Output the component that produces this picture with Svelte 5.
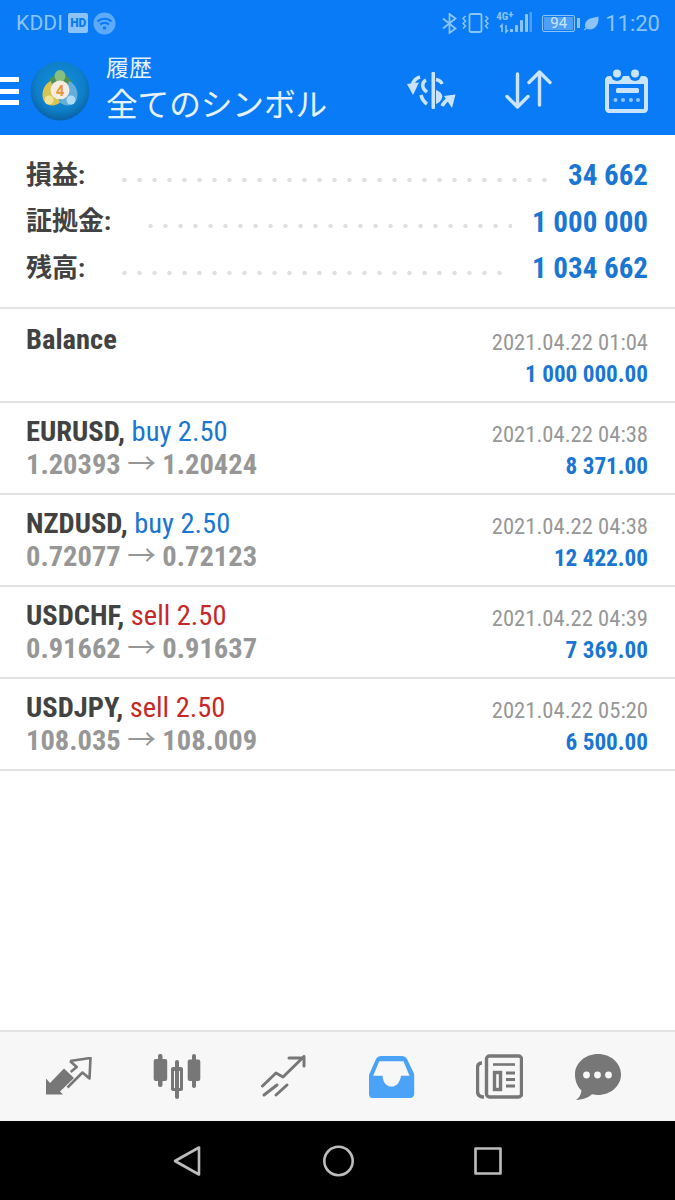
<script>
  const summary = [
    { label: '損益:', value: '34 662' },
    { label: '証拠金:', value: '1 000 000' },
    { label: '残高:', value: '1 034 662' }
  ];

  const deals = [
    { symbol: 'EURUSD', side: 'buy', lots: '2.50', open: '1.20393', close: '1.20424', time: '2021.04.22 04:38', profit: '8 371.00' },
    { symbol: 'NZDUSD', side: 'buy', lots: '2.50', open: '0.72077', close: '0.72123', time: '2021.04.22 04:38', profit: '12 422.00' },
    { symbol: 'USDCHF', side: 'sell', lots: '2.50', open: '0.91662', close: '0.91637', time: '2021.04.22 04:39', profit: '7 369.00' },
    { symbol: 'USDJPY', side: 'sell', lots: '2.50', open: '108.035', close: '108.009', time: '2021.04.22 05:20', profit: '6 500.00' }
  ];
</script>

<div class="screen">
  <header class="header">
    <div class="status">
      <div class="status__left">
        <span class="carrier">KDDI</span>
        <span class="hd">HD</span>
        <svg class="wifi" width="23" height="23" viewBox="0 0 23 23">
          <circle cx="11.5" cy="11.5" r="11" fill="#5eaafa" />
          <path d="M4.5 9.5a10 10 0 0 1 14 0M7 12.5a6.4 6.4 0 0 1 9 0" fill="none" stroke="#0a7bf7" stroke-width="2" />
          <circle cx="11.5" cy="16" r="1.8" fill="#0a7bf7" />
        </svg>
      </div>
      <div class="status__right">
        <svg class="bt" width="15" height="21" viewBox="0 0 15 21" fill="none" stroke="#8cc3fb" stroke-width="1.8">
          <path d="M1 5.500l12.500 10-6 4.500V1l6 4.500L1 15.500" />
        </svg>
        <svg class="vibrate" width="27" height="20" viewBox="0 0 27 20" fill="none" stroke="#8cc3fb" stroke-width="1.8">
          <rect x="7.500" y="1" width="12" height="18" rx="1.500" />
          <path d="M3.500 3L1 5.500 3.500 8 1 10.500 3.500 13 1 15.500M23.500 3L26 5.500 23.500 8 26 10.500 23.500 13 26 15.500" stroke-width="1.500" />
        </svg>
        <div class="net">
          <span class="net__label">4G<i>+</i></span>
          <svg class="net__signal" width="36" height="22" viewBox="0 0 36 22">
            <path d="M6 20v-7l-2 2M10 13v7l2-2" fill="none" stroke="#8cc3fb" stroke-width="1.600" />
            <rect x="14" y="17" width="3" height="3" fill="#8cc3fb" />
            <rect x="19" y="13" width="3" height="7" rx="1" fill="#8cc3fb" />
            <rect x="24" y="8" width="3" height="12" rx="1" fill="#8cc3fb" />
            <rect x="29" y="2" width="3" height="18" rx="1" fill="#8cc3fb" />
            <rect x="33.500" y="0" width="2.500" height="20" fill="#4d9ff8" />
          </svg>
        </div>
        <div class="battery">
          <div class="battery__body"><span class="battery__level">94</span></div>
          <span class="battery__tip"></span>
        </div>
        <svg class="leaf" width="15" height="15" viewBox="0 0 15 15" fill="#8cc3fb">
          <path d="M14.500.5C15 8 12 13.500 5.500 13.500c-1.300 0-2.400-.4-3-.9L1 14.500 0 13.500l1.600-2C.6 9.500 1 6 3.800 3.800 6.500 1.700 11 1.800 14.500.5z" />
        </svg>
        <span class="clock">11:20</span>
      </div>
    </div>

    <div class="toolbar">
      <div class="burger"><span></span><span></span><span></span></div>
      <svg class="logo" width="60" height="60" viewBox="0 0 60 60">
        <defs>
          <radialGradient id="disc" cx="50%" cy="42%" r="58%">
            <stop offset="0" stop-color="#1392e6" />
            <stop offset="0.7" stop-color="#0f7fc9" />
            <stop offset="1" stop-color="#0a62a4" />
          </radialGradient>
        </defs>
        <circle cx="30" cy="30" r="29.500" fill="url(#disc)" />
        <path d="M17 30C16 19 23 13 30 13s14 6 13 17l-13-6z" fill="#4f9156" />
        <ellipse cx="30" cy="15" rx="5.500" ry="6" fill="#86bf80" />
        <path d="M21 20C12 24 11 35 14 40c4 6 12 5.500 16.500 1L24 32z" fill="#d8c452" />
        <circle cx="19" cy="39" r="4.500" fill="#efe39a" />
        <path d="M39 20c9 4 10 15 7 20-4 6-12 5.500-16.500 1L36 32z" fill="#63aeda" />
        <circle cx="41" cy="39" r="4.500" fill="#b0dbf1" />
        <circle cx="30" cy="29" r="9.500" fill="#f5ece2" />
        <text class="logo__four" x="30" y="35" text-anchor="middle">4</text>
      </svg>
      <div class="titles">
        <span class="titles__sub">履歴</span>
        <span class="titles__main">全てのシンボル</span>
      </div>
      <div class="actions">
        <svg width="50" height="40" viewBox="0 0 50 40" fill="#cbe4fd" stroke="none">
          <rect x="24.500" y="1" width="3.500" height="37" rx="1" />
          <g fill="none" stroke="#cbe4fd" stroke-width="3.500">
            <path d="M29 8.500c3 .5 5 1.500 6 4.500" />
            <path d="M19 9c-4 2-5 8 1 12" />
            <path d="M14 24c1 4 3 7 6 9" />
            <path d="M13 6C9 7 7 9 5 14" stroke-width="3.600" />
            <path d="M35 35c2-4 4-6 8-8" stroke-width="3.600" />
          </g>
          <path d="M29 19c5 2 7 5 6 8-1 3-3 5-6 6z" />
          <path d="M0 13l12-1.500-6 12.500z" />
          <path d="M37 25l11.500-1.500L45 37z" />
        </svg>
        <svg width="47" height="40" viewBox="0 0 47 40" fill="none" stroke="#cbe4fd" stroke-width="3.400" stroke-linecap="round" stroke-linejoin="round">
          <path d="M12.500 4v33M2 26.500L12.500 37 23 26.500M34.500 35V2M24 12.500L34.500 2 45 12.500" />
        </svg>
        <svg width="43" height="44" viewBox="0 0 43 44" fill="#cbe4fd">
          <path fill-rule="evenodd" d="M4 7h35c2.200 0 4 1.800 4 4v29c0 2.200-1.800 4-4 4H4c-2.200 0-4-1.800-4-4V11c0-2.200 1.800-4 4-4zm0 8v24c0 .6.400 1 1 1h33c.6 0 1-.4 1-1V15z" />
          <circle cx="12" cy="6" r="6" fill="#0a7bf7" />
          <circle cx="30" cy="6" r="6" fill="#0a7bf7" />
          <circle cx="12" cy="4.500" r="4" />
          <circle cx="30" cy="4.500" r="4" />
          <rect x="11" y="19" width="23" height="5" rx="1.500" />
          <circle cx="10.500" cy="31" r="2" opacity=".7" />
          <circle cx="18" cy="31" r="2" opacity=".7" />
          <circle cx="26" cy="31" r="2" opacity=".7" />
          <circle cx="33" cy="31" r="2" opacity=".7" />
        </svg>
      </div>
    </div>
  </header>

  <section class="summary">
    {#each summary as row}
      <div class="summary__row">
        <span class="summary__label">{row.label}</span>
        <span class="summary__dots"></span>
        <span class="summary__value">{row.value}</span>
      </div>
    {/each}
  </section>

  <div class="deal deal--balance">
    <div class="deal__left">
      <div class="deal__title"><b>Balance</b></div>
    </div>
    <div class="deal__right">
      <div class="deal__time">2021.04.22 01:04</div>
      <div class="deal__profit">1 000 000.00</div>
    </div>
  </div>

  {#each deals as deal}
    <div class="deal">
      <div class="deal__left">
        <div class="deal__title">
          <b>{deal.symbol},</b>
          <span class={deal.side}>{deal.side} {deal.lots}</span>
        </div>
        <div class="deal__prices">{deal.open} <span class="arrow">→</span> {deal.close}</div>
      </div>
      <div class="deal__right">
        <div class="deal__time">{deal.time}</div>
        <div class="deal__profit">{deal.profit}</div>
      </div>
    </div>
  {/each}

  <div class="spacer"></div>

  <nav class="tabs">
    <div class="tab">
      <svg width="46" height="40" viewBox="0 0 46 40">
        <path d="M0 37.500V21.500l4 4.500 14-14.500 10 9.500-14 13.500 3 3z" fill="#777" />
        <path d="M24 4L44.500 1 43.500 21.500 36.500 15.500 21.500 30.500M24 4l6.700 6-6 5" fill="none" stroke="#777" stroke-width="2.600" stroke-linejoin="round" />
      </svg>
    </div>
    <div class="tab">
      <svg width="48" height="46" viewBox="0 0 48 46" fill="#777">
        <rect x="5" y="0" width="4.500" height="33" rx="2" />
        <rect x="0.700" y="5" width="13.500" height="22" rx="2" />
        <rect x="22" y="6" width="4" height="39" rx="2" />
        <path fill-rule="evenodd" d="M20 13h8c1.100 0 2 .9 2 2v20c0 1.100-.9 2-2 2h-8c-1.100 0-2-.9-2-2V15c0-1.100.9-2 2-2zm1 4v17h6V17z" />
        <rect x="39" y="0" width="4" height="34" rx="2" />
        <rect x="34.700" y="5.500" width="12.600" height="21.500" rx="2" />
      </svg>
    </div>
    <div class="tab">
      <svg width="46" height="44" viewBox="0 0 46 44" fill="none" stroke="#777" stroke-width="3" stroke-linecap="round" stroke-linejoin="round">
        <path d="M1.500 31L15 18l7 4L43 1.500M28 3h15v8" />
        <path d="M3 40l13-10M15 40l11-10" />
      </svg>
    </div>
    <div class="tab">
      <svg width="46" height="42" viewBox="0 0 46 42">
        <path fill="#4ba3f7" d="M12 0h21c2 0 4 1 5 3l6.500 13.500c.6 1 .7 2 .7 4V38c0 2.200-1.700 4-3.700 4H3c-1.800 0-3-1.800-3-4V20.500c0-2 .3-3 1-4L7 3c1-2 3-3 5-3z" />
        <path fill="#f7f7f7" d="M10.300 5.300h24.200l6 14.400H32c-1 7.300-5 10.800-9.500 10.800S14 27 13.500 19.700h-9.300z" />
      </svg>
    </div>
    <div class="tab">
      <svg width="47" height="45" viewBox="0 0 47 45" fill="none" stroke="#777" stroke-width="3.400">
        <rect x="10.500" y="2" width="35" height="41" rx="3" />
        <path d="M6 9C3 9 1.500 11 1.500 14v23c0 4 2.500 6 6.500 6" />
        <path d="M17 10.500h22" stroke-width="2.600" />
        <rect x="18.500" y="18.500" width="6" height="17" />
        <path d="M30 19h9M30 25.500h9M30 32h9" stroke-width="3" />
      </svg>
    </div>
    <div class="tab">
      <svg width="46" height="46" viewBox="0 0 46 46">
        <path fill="#777" d="M23 0c12.700 0 23 9 23 20.500S35.700 41 23 41c-2 0-4-.3-6-.8-3 3-8 5.300-16 5.800 3-2 5-5 5.500-9.500C2.500 33 0 27 0 20.500 0 9 10.300 0 23 0z" />
        <circle cx="11.500" cy="21" r="3.400" fill="#f7f7f7" />
        <circle cx="22.500" cy="21" r="3.400" fill="#f7f7f7" />
        <circle cx="33.500" cy="21" r="3.400" fill="#f7f7f7" />
      </svg>
    </div>
  </nav>

  <div class="softkeys">
    <svg width="30" height="32" viewBox="0 0 30 32" fill="none" stroke="#bdbdbd" stroke-width="2.600" stroke-linejoin="round">
      <path d="M2 16L26 2.500v27z" />
    </svg>
    <svg width="32" height="32" viewBox="0 0 32 32" fill="none" stroke="#bdbdbd" stroke-width="2.600">
      <circle cx="15.500" cy="16" r="14.200" />
    </svg>
    <svg width="28" height="28" viewBox="0 0 28 28" fill="none" stroke="#bdbdbd" stroke-width="2.600" stroke-linejoin="round">
      <rect x="1.500" y="1.500" width="25" height="25" />
    </svg>
  </div>
</div>

<style>
  :global(body) {
    margin: 0;
    background: #fff;
  }

  .screen {
    width: 675px;
    height: 1200px;
    display: flex;
    flex-direction: column;
    overflow: hidden;
    font-family: Roboto, "Noto Sans CJK JP", sans-serif;
    background: #fff;
  }

  .header {
    height: 135px;
    flex: none;
    background: #0a7bf7;
    color: #fff;
  }

  .status {
    height: 46px;
    display: flex;
    justify-content: space-between;
    align-items: center;
    padding: 0 15px 0 16px;
    color: #8cc3fb;
  }

  .status__left,
  .status__right {
    display: flex;
    align-items: center;
  }

  .status__left {
    gap: 5px;
  }

  .carrier {
    font-size: 21px;
    letter-spacing: 0.2px;
  }

  .hd {
    width: 20px;
    height: 20px;
    border-radius: 2px;
    background: #8cc3fb;
    color: #0a7bf7;
    font-size: 12px;
    font-weight: 900;
    line-height: 20px;
    text-align: center;
  }

  .vibrate {
    margin-left: 5px;
  }

  .net {
    width: 36px;
    height: 22px;
    margin-left: 7px;
    position: relative;
  }

  .net__label {
    position: absolute;
    left: 0;
    top: -1px;
    font-size: 11px;
    font-stretch: 75%;
    line-height: 12px;
    font-weight: 700;
  }

  .net__label i {
    font-style: normal;
    position: relative;
    top: -2px;
  }

  .net__signal {
    position: absolute;
    left: 0;
    top: 0;
  }

  .battery {
    display: flex;
    align-items: center;
    gap: 2px;
    margin-left: 10px;
  }

  .battery__body {
    width: 33px;
    height: 17px;
    box-sizing: border-box;
    padding: 1px;
    border: 1px solid #8cc3fb;
    border-radius: 2px;
  }

  .battery__level {
    display: block;
    height: 100%;
    background: #4d9ff8;
    color: #cbe4fd;
    font-size: 15px;
    line-height: 13px;
    text-align: center;
  }

  .battery__tip {
    width: 3px;
    height: 10px;
    background: #8cc3fb;
  }

  .leaf {
    margin-left: 4px;
  }

  .clock {
    font-size: 22px;
    margin-left: 6px;
  }

  .toolbar {
    height: 89px;
    display: flex;
    align-items: center;
  }

  .burger {
    width: 19px;
    display: flex;
    flex-direction: column;
    gap: 6.500px;
    margin-top: 1px;
  }

  .burger span {
    height: 5px;
    background: #fff;
  }

  .logo {
    margin-left: 11px;
  }

  .logo__four {
    font-size: 15px;
    font-weight: 700;
    fill: #e9953a;
  }

  .titles {
    display: flex;
    flex-direction: column;
    margin-left: 16px;
    color: #e6f2fe;
  }

  .titles__sub {
    font-size: 23px;
    line-height: 28px;
    margin-top: 1px;
  }

  .titles__main {
    font-size: 31.700px;
    line-height: 42px;
    margin-top: 2px;
    letter-spacing: -0.1px;
    white-space: nowrap;
  }

  .actions {
    margin-left: auto;
    padding-right: 27px;
    display: flex;
    align-items: center;
  }

  .actions svg:nth-child(2) {
    margin: -2px 53px 0 48px;
  }

  .summary {
    height: 174px;
    flex: none;
    box-sizing: border-box;
    padding: 17px 27px 0 26px;
    border-bottom: 2px solid #e3e3e3;
  }

  .summary__row {
    height: 46.500px;
    display: flex;
    align-items: center;
  }

  .summary__label {
    font-size: 26px;
    line-height: 30px;
    font-weight: 700;
    color: #424242;
    margin-top: -1px;
  }

  .summary__dots {
    flex: 1;
    height: 4px;
    margin: 9px 20px 0 32px;
    background-image: radial-gradient(circle, #e0e0e0 2px, transparent 2.200px);
    background-size: 15px 4px;
    background-repeat: repeat-x;
  }

  .summary__value {
    font-size: 29px;
    line-height: 34px;
    font-stretch: 75%;
    font-weight: 700;
    color: #1976d2;
    white-space: nowrap;
  }

  .deal {
    height: 92px;
    flex: none;
    box-sizing: border-box;
    padding: 13px 27px 0 26px;
    border-bottom: 2px solid #e3e3e3;
    display: flex;
    justify-content: space-between;
    font-stretch: 75%;
  }

  .deal--balance {
    height: 94px;
    padding-top: 15px;
  }

  .deal__title {
    font-size: 28.500px;
    line-height: 32px;
    color: #424242;
    white-space: nowrap;
  }

  .deal__title b {
    font-weight: 700;
  }

  .buy {
    color: #1976d2;
  }

  .sell {
    color: #c62828;
  }

  .deal__prices {
    font-size: 28.500px;
    line-height: 32px;
    margin-top: 1px;
    font-weight: 700;
    color: #979797;
    white-space: nowrap;
  }

  .arrow {
    font-weight: 400;
  }

  .deal__right {
    text-align: right;
    padding-top: 4px;
  }

  .deal__time {
    font-size: 22.600px;
    line-height: 30px;
    color: #979797;
    white-space: nowrap;
  }

  .deal__profit {
    font-size: 23.200px;
    line-height: 33px;
    font-weight: 700;
    color: #1976d2;
    white-space: nowrap;
  }

  .spacer {
    flex: 1;
  }

  .tabs {
    height: 91px;
    flex: none;
    box-sizing: border-box;
    border-top: 2px solid #e3e3e3;
    background: #f7f7f7;
    padding-left: 15px;
    display: flex;
    align-items: center;
  }

  .tab {
    width: 107.750px;
    flex: none;
    display: flex;
    justify-content: center;
  }

  .tab:last-child {
    margin-left: -10px;
  }

  .softkeys {
    height: 79px;
    flex: none;
    background: #000;
    padding: 0 173px;
    display: flex;
    justify-content: space-between;
    align-items: center;
  }
</style>
